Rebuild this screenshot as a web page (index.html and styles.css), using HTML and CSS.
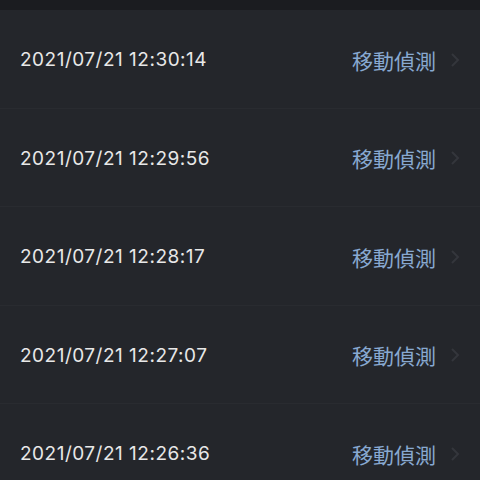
FILE: index.html
```html
<!DOCTYPE html>
<html lang="zh-Hant">
<head>
<meta charset="utf-8">
<link rel="stylesheet" href="styles.css">
</head>
<body>
<div class="topbar"></div>
<ul class="list">
  <li class="row"><span class="time">2021/07/21 12:30:14</span><span class="tag">移動偵測</span><svg class="chev" viewBox="0 0 10 16"><path d="M2 2l6 6-6 6"/></svg></li>
  <li class="row"><span class="time">2021/07/21 12:29:56</span><span class="tag">移動偵測</span><svg class="chev" viewBox="0 0 10 16"><path d="M2 2l6 6-6 6"/></svg></li>
  <li class="row"><span class="time">2021/07/21 12:28:17</span><span class="tag">移動偵測</span><svg class="chev" viewBox="0 0 10 16"><path d="M2 2l6 6-6 6"/></svg></li>
  <li class="row"><span class="time">2021/07/21 12:27:07</span><span class="tag">移動偵測</span><svg class="chev" viewBox="0 0 10 16"><path d="M2 2l6 6-6 6"/></svg></li>
  <li class="row"><span class="time">2021/07/21 12:26:36</span><span class="tag">移動偵測</span><svg class="chev" viewBox="0 0 10 16"><path d="M2 2l6 6-6 6"/></svg></li>
</ul>
</body>
</html>
```
FILE: styles.css
```css
html, body {
  margin: 0;
  padding: 0;
  background: #24262b;
  height: 480px;
  overflow: hidden;
}
.topbar {
  height: 10px;
  background: #1b1c20;
}
.list {
  list-style: none;
  margin: 0;
  padding: 0;
}
.row {
  height: 98.5px;
  box-sizing: border-box;
  display: flex;
  align-items: center;
  padding: 2px 20px 0 20px;
  border-bottom: 1px solid #292b30;
}
.time {
  flex: 1;
  font-family: Inter, "Noto Sans", sans-serif;
  font-size: 19px;
  color: #e8e8e8;
  letter-spacing: 0.5px;
}
.tag {
  font-family: "Noto Sans CJK TC", sans-serif;
  font-size: 21px;
  color: #88a9d1;
}
.chev {
  width: 10px;
  height: 16px;
  margin-left: 14px;
  fill: none;
  stroke: #34363c;
  stroke-width: 2;
}
```
